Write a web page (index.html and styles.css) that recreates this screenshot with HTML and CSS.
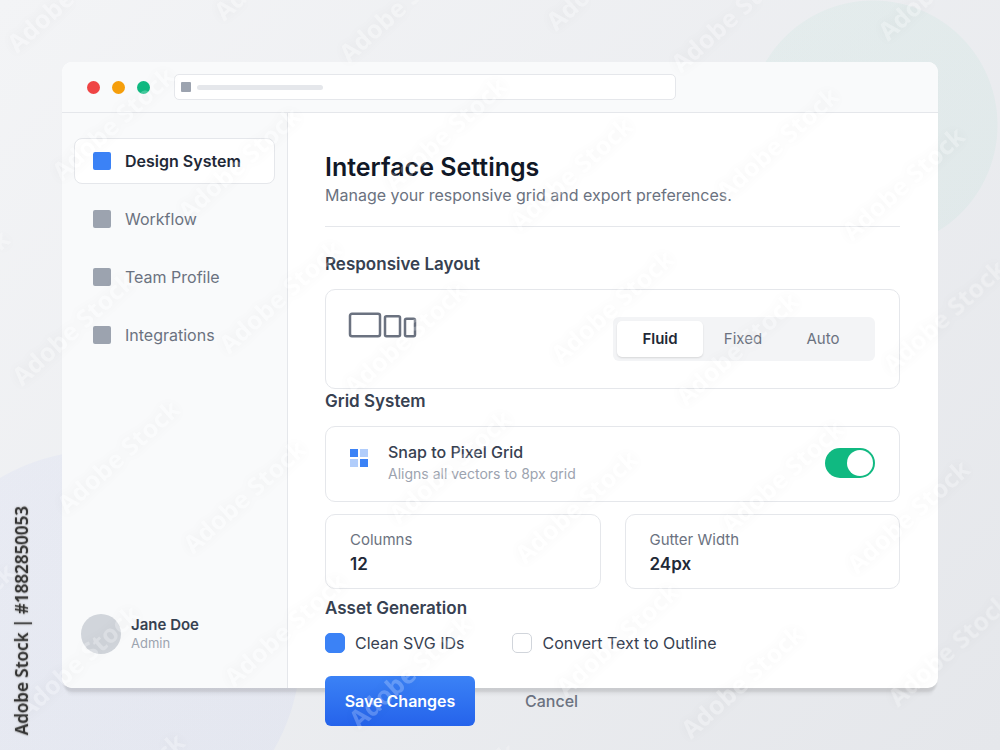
FILE: index.html
```html
<!DOCTYPE html>
<html lang="en">
<head>
<meta charset="utf-8">
<meta name="viewport" content="width=device-width, initial-scale=1">
<title>Interface Settings</title>
<link rel="stylesheet" href="styles.css">
</head>
<body>
<div class="window">
  <header class="topbar">
    <div class="dots">
      <span class="dot dot-red"></span>
      <span class="dot dot-amber"></span>
      <span class="dot dot-green"></span>
    </div>
    <div class="address">
      <span class="address-icon"></span>
      <span class="address-line"></span>
    </div>
  </header>
  <div class="body">
    <aside class="sidebar">
      <nav class="nav">
        <a class="nav-item nav-item-active" href="#design"><span class="nav-icon"></span>Design System</a>
        <a class="nav-item" href="#workflow"><span class="nav-icon"></span>Workflow</a>
        <a class="nav-item" href="#team"><span class="nav-icon"></span>Team Profile</a>
        <a class="nav-item" href="#integrations"><span class="nav-icon"></span>Integrations</a>
      </nav>
      <div class="user">
        <span class="avatar"></span>
        <div>
          <div class="user-name">Jane Doe</div>
          <div class="user-role">Admin</div>
        </div>
      </div>
    </aside>
    <main class="main">
      <div class="heading">
        <h1 class="title">Interface Settings</h1>
        <p class="subtitle">Manage your responsive grid and export preferences.</p>
      </div>

      <h2 class="section-title section-first">Responsive Layout</h2>
      <div class="card layout-card">
        <svg class="devices" width="68" height="26" viewBox="0 0 68 26" fill="none" stroke="#6b7280" stroke-width="2.5" aria-hidden="true">
          <rect x="0" y="1.75" width="30" height="22.5" rx="2"/>
          <rect x="35" y="4.25" width="15" height="20" rx="1.5"/>
          <rect x="55" y="6.75" width="10" height="17.5" rx="1.5"/>
        </svg>
        <div class="segments" role="radiogroup" aria-label="Layout mode">
          <label class="segment segment-wide"><input type="radio" name="layout" checked><span>Fluid</span></label>
          <label class="segment"><input type="radio" name="layout"><span>Fixed</span></label>
          <label class="segment"><input type="radio" name="layout"><span>Auto</span></label>
        </div>
      </div>

      <h2 class="section-title">Grid System</h2>
      <div class="card snap-card">
        <svg class="grid-icon" width="18" height="18" viewBox="0 0 18 18" fill="#3b82f6" aria-hidden="true">
          <rect width="8" height="8"/>
          <rect x="10" width="8" height="8" opacity=".4"/>
          <rect y="10" width="8" height="8" opacity=".4"/>
          <rect x="10" y="10" width="8" height="8"/>
        </svg>
        <div class="snap-text">
          <label class="snap-title" for="snap">Snap to Pixel Grid</label>
          <div class="snap-note">Aligns all vectors to 8px grid</div>
        </div>
        <input class="toggle" type="checkbox" id="snap" checked>
      </div>
      <div class="fields">
        <div class="card field">
          <label class="field-label" for="columns">Columns</label>
          <input class="field-value" id="columns" type="text" value="12">
        </div>
        <div class="card field">
          <label class="field-label" for="gutter">Gutter Width</label>
          <input class="field-value" id="gutter" type="text" value="24px">
        </div>
      </div>

      <h2 class="section-title section-last">Asset Generation</h2>
      <div class="checks">
        <label class="check"><input type="checkbox" checked>Clean SVG IDs</label>
        <label class="check"><input type="checkbox">Convert Text to Outline</label>
      </div>
      <div class="actions">
        <button class="btn btn-primary" type="button">Save Changes</button>
        <button class="btn btn-plain" type="button">Cancel</button>
      </div>
    </main>
  </div>
</div>

<svg class="watermark" aria-hidden="true">
  <defs>
    <g id="tile">
      <text transform="translate(17 54) rotate(-42)">Adobe Stock</text>
      <text transform="translate(224 22) rotate(-42)">Adobe Stock</text>
      <text transform="translate(188 222) rotate(-42)">Adobe Stock</text>
      <text transform="translate(62 182) rotate(-42)">Adobe Stock</text>
    </g>
  </defs>
  <use href="#tile" x="-332" y="-10"/>
  <use href="#tile"/>
  <use href="#tile" x="332" y="10"/>
  <use href="#tile" x="664" y="20"/>
  <use href="#tile" x="-327" y="323"/>
  <use href="#tile" x="5" y="333"/>
  <use href="#tile" x="337" y="343"/>
  <use href="#tile" x="669" y="353"/>
  <use href="#tile" x="-322" y="656"/>
  <use href="#tile" x="10" y="666"/>
  <use href="#tile" x="342" y="676"/>
  <use href="#tile" x="674" y="686"/>
</svg>
<div class="stock-id">Adobe Stock | #1882850053</div>
</body>
</html>
```
FILE: styles.css
```css
* {
  box-sizing: border-box;
}

body {
  margin: 0;
  min-height: 100vh;
  padding: 62px;
  font-family: Inter, "Liberation Sans", sans-serif;
  font-size: 16px;
  color: #374151;
  background:
    radial-gradient(circle 125px at calc(100% - 127px) 125px, rgba(16, 185, 129, 0.04) 124px, transparent 125px),
    radial-gradient(circle 200px at 101px calc(100% - 100px), rgba(79, 110, 246, 0.045) 199px, transparent 200px),
    linear-gradient(135deg, #f3f4f6, #e5e7eb);
}

h1, h2, p {
  margin: 0;
}

input, button {
  font: inherit;
  margin: 0;
}

.window {
  display: flex;
  flex-direction: column;
  background: #fff;
  border-radius: 10px;
  box-shadow:
    0 5px 2px -1px rgba(0, 0, 0, 0.09),
    0 11px 3px -4px rgba(0, 0, 0, 0.04);
}

.topbar {
  display: flex;
  align-items: center;
  gap: 24px;
  height: 51px;
  padding: 0 25px;
  background: #f9fafb;
  border-bottom: 1px solid #e5e7eb;
  border-radius: 10px 10px 0 0;
}

.dots {
  display: flex;
  gap: 12px;
}

.dot {
  width: 13px;
  height: 13px;
  border-radius: 50%;
}

.dot-red { background: #ef4444; }
.dot-amber { background: #f59e0b; }
.dot-green { background: #10b981; }

.address {
  flex: 0 1 502px;
  display: flex;
  align-items: center;
  gap: 6px;
  height: 26px;
  padding: 0 6px;
  background: #fff;
  border: 1px solid #e5e7eb;
  border-radius: 5px;
}

.address-icon {
  width: 10px;
  height: 10px;
  border-radius: 1px;
  background: #9ca3af;
}

.address-line {
  width: 126px;
  height: 5px;
  border-radius: 3px;
  background: #e5e7eb;
}

.body {
  flex: 1;
  display: flex;
}

.sidebar {
  flex: 0 0 226px;
  display: flex;
  flex-direction: column;
  justify-content: space-between;
  padding: 25px 12px 34px;
  background: #f9fafb;
  border-right: 1px solid #e5e7eb;
  border-radius: 0 0 0 10px;
}

.nav {
  display: flex;
  flex-direction: column;
  gap: 12px;
}

.nav-item {
  display: flex;
  align-items: center;
  gap: 14px;
  height: 46px;
  padding: 0 18px;
  border: 1px solid transparent;
  border-radius: 8px;
  color: #6b7280;
  text-decoration: none;
}

.nav-item-active {
  background: #fff;
  border-color: #e5e7eb;
  color: #1f2937;
  font-weight: 600;
}

.nav-icon {
  width: 18px;
  height: 18px;
  border-radius: 2px;
  background: #9ca3af;
}

.nav-item-active .nav-icon {
  background: #3b82f6;
}

.user {
  display: flex;
  align-items: center;
  gap: 10px;
  padding-left: 7px;
}

.avatar {
  width: 40px;
  height: 40px;
  border-radius: 50%;
  background: #d1d5db;
}

.user-name {
  font-size: 15px;
  font-weight: 600;
  line-height: 18px;
}

.user-role {
  font-size: 13px;
  line-height: 18px;
  color: #9ca3af;
}

.main {
  flex: 1;
  min-width: 0;
  padding: 38px 38px 0 37px;
}

.heading {
  padding-bottom: 19px;
  border-bottom: 1px solid #e5e7eb;
}

.title {
  font-size: 25px;
  font-weight: 600;
  line-height: 32px;
  color: #111827;
}

.subtitle {
  font-size: 16px;
  line-height: 24px;
  color: #6b7280;
}

.section-title {
  margin-bottom: 13px;
  font-size: 17px;
  font-weight: 600;
  line-height: 24px;
}

.section-first { margin-top: 25px; }
.section-last { margin-top: 7px; }

.card {
  border: 1px solid #e5e7eb;
  border-radius: 10px;
  background: #fff;
}

.layout-card {
  display: flex;
  align-items: flex-start;
  justify-content: space-between;
  padding: 22px 24px;
}

.devices {
  overflow: visible;
}

.segments {
  display: flex;
  margin: 5px 0;
  padding: 4px 12px 4px 4px;
  border-radius: 6px;
  background: #f3f4f6;
  font-size: 15px;
}

.segment {
  position: relative;
  min-width: 80px;
  text-align: center;
  color: #6b7280;
}

.segment-wide {
  min-width: 86px;
}

.segment input {
  position: absolute;
  inset: 0;
  opacity: 0;
}

.segment span {
  display: block;
  line-height: 36px;
  border-radius: 5px;
}

.segment input:checked + span {
  background: #fff;
  color: #1f2937;
  font-weight: 600;
  box-shadow: 0 1px 2px rgba(0, 0, 0, 0.12);
}

.snap-card {
  display: flex;
  align-items: center;
  gap: 20px;
  padding: 14px 24px 16px;
}

.grid-icon {
  align-self: flex-start;
  margin-top: 8px;
}

.snap-text {
  flex: 1;
}

.snap-title {
  display: block;
  font-weight: 500;
  line-height: 22px;
}

.snap-note {
  font-size: 14px;
  line-height: 22px;
  color: #9ca3af;
}

.toggle {
  appearance: none;
  width: 50px;
  height: 30px;
  padding: 2px;
  border-radius: 15px;
  background: #d1d5db;
}

.toggle::before {
  content: "";
  display: block;
  width: 26px;
  height: 26px;
  border-radius: 50%;
  background: #fff;
}

.toggle:checked {
  background: #10b981;
}

.toggle:checked::before {
  margin-left: auto;
}

.fields {
  display: grid;
  grid-template-columns: 1fr 1fr;
  gap: 24px;
  margin-top: 12px;
}

.field {
  padding: 13px 24px 12px;
}

.field-label {
  display: block;
  font-size: 15px;
  line-height: 24px;
  color: #6b7280;
}

.field-value {
  display: block;
  width: 100%;
  height: 24px;
  padding: 0;
  border: 0;
  background: none;
  font-size: 17px;
  font-weight: 600;
  color: #1f2937;
}

.checks {
  display: flex;
  gap: 48px;
}

.check {
  display: flex;
  align-items: center;
  gap: 10px;
  line-height: 20px;
}

.check input {
  appearance: none;
  width: 20px;
  height: 20px;
  border: 1px solid #d1d5db;
  border-radius: 5px;
  background: #fff;
}

.check input:checked {
  border-color: #3b82f6;
  background: #3b82f6;
}

/* The action row hangs over the lower edge of the window. */
.actions {
  display: flex;
  gap: 25px;
  margin: 23px 0 -38px;
}

.btn {
  height: 50px;
  border: 0;
  border-radius: 6px;
  font-size: 16px;
}

.btn-primary {
  width: 150px;
  background: linear-gradient(#3b82f6, #2563eb);
  color: #fff;
  font-weight: 600;
}

.btn-plain {
  padding: 0 25px;
  background: none;
  color: #6b7280;
  font-weight: 500;
}

.watermark {
  position: fixed;
  inset: 0;
  width: 100%;
  height: 100%;
  pointer-events: none;
  font: 700 25px "Noto Sans", "Open Sans", sans-serif;
  fill: #fff;
  filter: drop-shadow(0 0 6px rgba(0, 0, 0, 0.2));
  opacity: 0.22;
}

.stock-id {
  position: fixed;
  left: 9px;
  bottom: 15px;
  writing-mode: vertical-rl;
  transform: rotate(180deg);
  font: 600 17px/26px "Noto Sans", "Open Sans", sans-serif;
  color: #333;
  text-shadow: 0 0 2px #bbb, 0 0 2px #bbb;
}
```
